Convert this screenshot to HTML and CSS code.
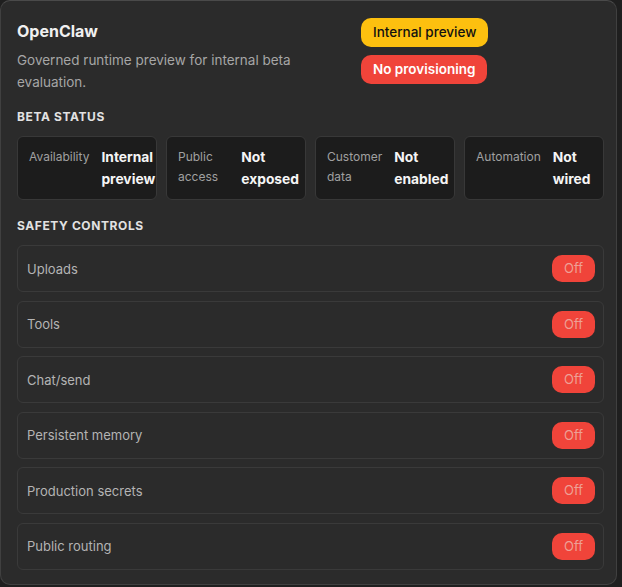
FILE: index.html
```html
<!DOCTYPE html>
<html lang="en">
<head>
  <meta charset="UTF-8" />
  <title>OpenClaw</title>
  <link rel="stylesheet" href="styles.css">
</head>
<body>
  <div class="panel">
    <div class="header">
      <div class="intro">
        <h1>OpenClaw</h1>
        <p>Governed runtime preview for internal beta evaluation.</p>
      </div>
      <div class="badges">
        <span class="badge badge-warn">Internal preview</span>
        <span class="badge badge-danger">No provisioning</span>
      </div>
    </div>

    <h2>Beta status</h2>
    <div class="status-grid">
      <div class="status">
        <span class="status-label">Availability</span>
        <span class="status-value">Internal preview</span>
      </div>
      <div class="status">
        <span class="status-label">Public access</span>
        <span class="status-value">Not exposed</span>
      </div>
      <div class="status">
        <span class="status-label">Customer data</span>
        <span class="status-value">Not enabled</span>
      </div>
      <div class="status">
        <span class="status-label">Automation</span>
        <span class="status-value">Not wired</span>
      </div>
    </div>

    <h2 class="gap-top">Safety controls</h2>
    <div class="controls">
      <div class="control"><span>Uploads</span><span class="pill">Off</span></div>
      <div class="control"><span>Tools</span><span class="pill">Off</span></div>
      <div class="control"><span>Chat/send</span><span class="pill">Off</span></div>
      <div class="control"><span>Persistent memory</span><span class="pill">Off</span></div>
      <div class="control"><span>Production secrets</span><span class="pill">Off</span></div>
      <div class="control"><span>Public routing</span><span class="pill">Off</span></div>
    </div>
  </div>
</body>
</html>
```

FILE: styles.css
```css
body {
  margin: 0;
  background-color: #1f1f1f;
  font-family: Inter, "Noto Sans", sans-serif;
  color: #f2f2f2;
}
.panel {
  width: 587px;
  background-color: #2b2b2b;
  border: 1px solid #404040;
  border-top-color: #4a4a4a;
  border-radius: 10px;
  padding: 18px 12px 14px 16px;
}
.header {
  display: flex;
  gap: 16px;
}
.intro {
  flex: none;
  width: 328px;
}
h1 {
  margin: 0;
  font-size: 16px;
  line-height: 24px;
  font-weight: 700;
  color: #f0f0f0;
}
.intro p {
  margin: 6px 0 0;
  font-size: 13.5px;
  line-height: 22px;
  color: #a6a6a6;
  max-width: 290px;
}
.badges {
  display: flex;
  flex-direction: column;
  align-items: flex-start;
  gap: 8px;
  margin-top: -1px;
}
.badge {
  padding: 6px 12px;
  border-radius: 10px;
  font-size: 13.5px;
  line-height: 17px;
  font-weight: 500;
}
.badge-warn {
  background-color: #fdc00f;
  color: #111;
}
.badge-danger {
  background-color: #f0443a;
  color: #fff;
  font-weight: 600;
}
h2 {
  margin: 16px 0 11px;
  font-size: 12px;
  line-height: 16px;
  font-weight: 700;
  letter-spacing: 0.6px;
  text-transform: uppercase;
  color: #e2e2e2;
}
h2.gap-top {
  margin-top: 18px;
}
.status-grid {
  display: grid;
  grid-template-columns: repeat(4, minmax(0, 1fr));
  gap: 9px;
}
.status {
  display: flex;
  gap: 12px;
  height: 64px;
  box-sizing: border-box;
  padding: 9px 6px 9px 11px;
  background-color: #1c1c1c;
  border: 1px solid #383838;
  border-radius: 6px;
}
.status-label {
  padding-top: 1px;
  font-size: 12px;
  line-height: 20px;
  color: #a0a0a0;
}
.status-value {
  font-size: 13.8px;
  line-height: 22px;
  font-weight: 700;
  color: #f5f5f5;
}
.controls {
  display: flex;
  flex-direction: column;
  gap: 8.6px;
}
.control {
  display: flex;
  align-items: center;
  justify-content: space-between;
  height: 47px;
  box-sizing: border-box;
  padding: 0 8px 0 9px;
  border: 1px solid #3a3a3a;
  border-radius: 6px;
  font-size: 13px;
  color: #b4b4b4;
}
.pill {
  padding: 5px 12px;
  border-radius: 10px;
  background-color: #f0443a;
  color: #eea095;
  font-size: 13px;
  line-height: 17px;
}
```
